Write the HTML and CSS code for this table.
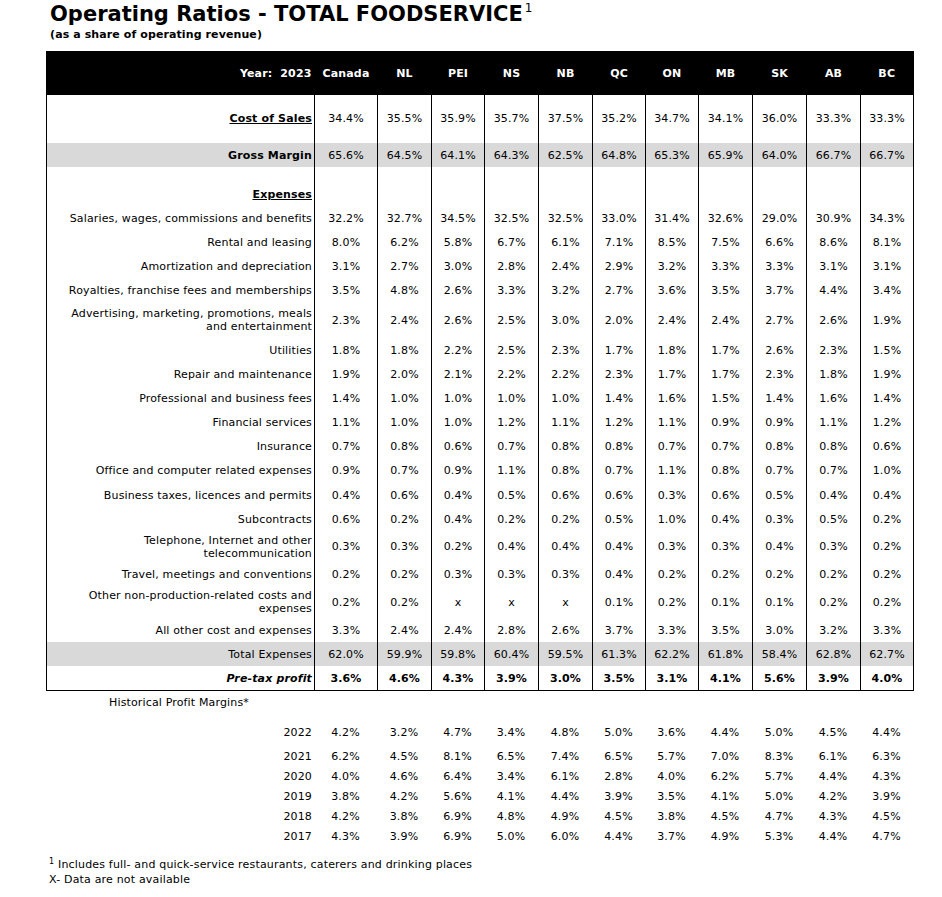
FILE: index.html
```html
<!DOCTYPE html>
<html>
<head>
<meta charset="utf-8">
<title>Operating Ratios - TOTAL FOODSERVICE</title>
<link rel="stylesheet" href="styles.css">
</head>
<body>
<div class="page">
  <h1 class="title">Operating Ratios - TOTAL FOODSERVICE<sup>1</sup></h1>
  <div class="subtitle">(as a share of operating revenue)</div>

  <table class="ratios">
    <colgroup>
      <col class="c-label"><col class="c-canada">
      <col class="c-p54"><col class="c-p53"><col class="c-p54"><col class="c-p54"><col class="c-p53">
      <col class="c-p53"><col class="c-p54"><col class="c-p54"><col class="c-p54"><col class="c-p53">
    </colgroup>
    <thead>
      <tr class="head">
        <th class="lbl">Year:&nbsp; 2023</th><th>Canada</th><th>NL</th><th>PEI</th><th>NS</th><th>NB</th><th>QC</th><th>ON</th><th>MB</th><th>SK</th><th>AB</th><th>BC</th>
      </tr>
    </thead>
    <tbody>
      <tr class="sp sp1"><td></td><td></td><td></td><td></td><td></td><td></td><td></td><td></td><td></td><td></td><td></td><td></td></tr>
      <tr><td class="lbl b u">Cost of Sales</td><td>34.4%</td><td>35.5%</td><td>35.9%</td><td>35.7%</td><td>37.5%</td><td>35.2%</td><td>34.7%</td><td>34.1%</td><td>36.0%</td><td>33.3%</td><td>33.3%</td></tr>
      <tr class="sp sp2"><td></td><td></td><td></td><td></td><td></td><td></td><td></td><td></td><td></td><td></td><td></td><td></td></tr>
      <tr class="grey"><td class="lbl b">Gross Margin</td><td>65.6%</td><td>64.5%</td><td>64.1%</td><td>64.3%</td><td>62.5%</td><td>64.8%</td><td>65.3%</td><td>65.9%</td><td>64.0%</td><td>66.7%</td><td>66.7%</td></tr>
      <tr class="sp sp3"><td></td><td></td><td></td><td></td><td></td><td></td><td></td><td></td><td></td><td></td><td></td><td></td></tr>
      <tr><td class="lbl b u">Expenses</td><td></td><td></td><td></td><td></td><td></td><td></td><td></td><td></td><td></td><td></td><td></td></tr>
      <tr><td class="lbl">Salaries, wages, commissions and benefits</td><td>32.2%</td><td>32.7%</td><td>34.5%</td><td>32.5%</td><td>32.5%</td><td>33.0%</td><td>31.4%</td><td>32.6%</td><td>29.0%</td><td>30.9%</td><td>34.3%</td></tr>
      <tr><td class="lbl">Rental and leasing</td><td>8.0%</td><td>6.2%</td><td>5.8%</td><td>6.7%</td><td>6.1%</td><td>7.1%</td><td>8.5%</td><td>7.5%</td><td>6.6%</td><td>8.6%</td><td>8.1%</td></tr>
      <tr><td class="lbl">Amortization and depreciation</td><td>3.1%</td><td>2.7%</td><td>3.0%</td><td>2.8%</td><td>2.4%</td><td>2.9%</td><td>3.2%</td><td>3.3%</td><td>3.3%</td><td>3.1%</td><td>3.1%</td></tr>
      <tr><td class="lbl">Royalties, franchise fees and memberships</td><td>3.5%</td><td>4.8%</td><td>2.6%</td><td>3.3%</td><td>3.2%</td><td>2.7%</td><td>3.6%</td><td>3.5%</td><td>3.7%</td><td>4.4%</td><td>3.4%</td></tr>
      <tr class="two tall"><td class="lbl">Advertising, marketing, promotions, meals<br>and entertainment</td><td>2.3%</td><td>2.4%</td><td>2.6%</td><td>2.5%</td><td>3.0%</td><td>2.0%</td><td>2.4%</td><td>2.4%</td><td>2.7%</td><td>2.6%</td><td>1.9%</td></tr>
      <tr><td class="lbl">Utilities</td><td>1.8%</td><td>1.8%</td><td>2.2%</td><td>2.5%</td><td>2.3%</td><td>1.7%</td><td>1.8%</td><td>1.7%</td><td>2.6%</td><td>2.3%</td><td>1.5%</td></tr>
      <tr><td class="lbl">Repair and maintenance</td><td>1.9%</td><td>2.0%</td><td>2.1%</td><td>2.2%</td><td>2.2%</td><td>2.3%</td><td>1.7%</td><td>1.7%</td><td>2.3%</td><td>1.8%</td><td>1.9%</td></tr>
      <tr><td class="lbl">Professional and business fees</td><td>1.4%</td><td>1.0%</td><td>1.0%</td><td>1.0%</td><td>1.0%</td><td>1.4%</td><td>1.6%</td><td>1.5%</td><td>1.4%</td><td>1.6%</td><td>1.4%</td></tr>
      <tr><td class="lbl">Financial services</td><td>1.1%</td><td>1.0%</td><td>1.0%</td><td>1.2%</td><td>1.1%</td><td>1.2%</td><td>1.1%</td><td>0.9%</td><td>0.9%</td><td>1.1%</td><td>1.2%</td></tr>
      <tr><td class="lbl">Insurance</td><td>0.7%</td><td>0.8%</td><td>0.6%</td><td>0.7%</td><td>0.8%</td><td>0.8%</td><td>0.7%</td><td>0.7%</td><td>0.8%</td><td>0.8%</td><td>0.6%</td></tr>
      <tr class="r25"><td class="lbl">Office and computer related expenses</td><td>0.9%</td><td>0.7%</td><td>0.9%</td><td>1.1%</td><td>0.8%</td><td>0.7%</td><td>1.1%</td><td>0.8%</td><td>0.7%</td><td>0.7%</td><td>1.0%</td></tr>
      <tr><td class="lbl">Business taxes, licences and permits</td><td>0.4%</td><td>0.6%</td><td>0.4%</td><td>0.5%</td><td>0.6%</td><td>0.6%</td><td>0.3%</td><td>0.6%</td><td>0.5%</td><td>0.4%</td><td>0.4%</td></tr>
      <tr><td class="lbl">Subcontracts</td><td>0.6%</td><td>0.2%</td><td>0.4%</td><td>0.2%</td><td>0.2%</td><td>0.5%</td><td>1.0%</td><td>0.4%</td><td>0.3%</td><td>0.5%</td><td>0.2%</td></tr>
      <tr class="two"><td class="lbl">Telephone, Internet and other<br>telecommunication</td><td>0.3%</td><td>0.3%</td><td>0.2%</td><td>0.4%</td><td>0.4%</td><td>0.4%</td><td>0.3%</td><td>0.3%</td><td>0.4%</td><td>0.3%</td><td>0.2%</td></tr>
      <tr><td class="lbl">Travel, meetings and conventions</td><td>0.2%</td><td>0.2%</td><td>0.3%</td><td>0.3%</td><td>0.3%</td><td>0.4%</td><td>0.2%</td><td>0.2%</td><td>0.2%</td><td>0.2%</td><td>0.2%</td></tr>
      <tr class="two t32"><td class="lbl">Other non-production-related costs and<br>expenses</td><td>0.2%</td><td>0.2%</td><td>x</td><td>x</td><td>x</td><td>0.1%</td><td>0.2%</td><td>0.1%</td><td>0.1%</td><td>0.2%</td><td>0.2%</td></tr>
      <tr><td class="lbl">All other cost and expenses</td><td>3.3%</td><td>2.4%</td><td>2.4%</td><td>2.8%</td><td>2.6%</td><td>3.7%</td><td>3.3%</td><td>3.5%</td><td>3.0%</td><td>3.2%</td><td>3.3%</td></tr>
      <tr class="grey"><td class="lbl">Total Expenses</td><td>62.0%</td><td>59.9%</td><td>59.8%</td><td>60.4%</td><td>59.5%</td><td>61.3%</td><td>62.2%</td><td>61.8%</td><td>58.4%</td><td>62.8%</td><td>62.7%</td></tr>
      <tr class="profit"><td class="lbl bi">Pre-tax profit</td><td>3.6%</td><td>4.6%</td><td>4.3%</td><td>3.9%</td><td>3.0%</td><td>3.5%</td><td>3.1%</td><td>4.1%</td><td>5.6%</td><td>3.9%</td><td>4.0%</td></tr>
    </tbody>
  </table>

  <div class="hist-title">Historical Profit Margins*</div>

  <table class="history">
    <colgroup>
      <col class="c-label"><col class="c-canada">
      <col class="c-p54"><col class="c-p53"><col class="c-p54"><col class="c-p54"><col class="c-p53">
      <col class="c-p53"><col class="c-p54"><col class="c-p54"><col class="c-p54"><col class="c-p53">
    </colgroup>
    <tbody>
      <tr><td class="yr">2022</td><td>4.2%</td><td>3.2%</td><td>4.7%</td><td>3.4%</td><td>4.8%</td><td>5.0%</td><td>3.6%</td><td>4.4%</td><td>5.0%</td><td>4.5%</td><td>4.4%</td></tr>
      <tr class="gap"><td colspan="12"></td></tr>
      <tr><td class="yr">2021</td><td>6.2%</td><td>4.5%</td><td>8.1%</td><td>6.5%</td><td>7.4%</td><td>6.5%</td><td>5.7%</td><td>7.0%</td><td>8.3%</td><td>6.1%</td><td>6.3%</td></tr>
      <tr><td class="yr">2020</td><td>4.0%</td><td>4.6%</td><td>6.4%</td><td>3.4%</td><td>6.1%</td><td>2.8%</td><td>4.0%</td><td>6.2%</td><td>5.7%</td><td>4.4%</td><td>4.3%</td></tr>
      <tr><td class="yr">2019</td><td>3.8%</td><td>4.2%</td><td>5.6%</td><td>4.1%</td><td>4.4%</td><td>3.9%</td><td>3.5%</td><td>4.1%</td><td>5.0%</td><td>4.2%</td><td>3.9%</td></tr>
      <tr><td class="yr">2018</td><td>4.2%</td><td>3.8%</td><td>6.9%</td><td>4.8%</td><td>4.9%</td><td>4.5%</td><td>3.8%</td><td>4.5%</td><td>4.7%</td><td>4.3%</td><td>4.5%</td></tr>
      <tr><td class="yr">2017</td><td>4.3%</td><td>3.9%</td><td>6.9%</td><td>5.0%</td><td>6.0%</td><td>4.4%</td><td>3.7%</td><td>4.9%</td><td>5.3%</td><td>4.4%</td><td>4.7%</td></tr>
    </tbody>
  </table>

  <div class="notes">
    <div><sup>1</sup> Includes full- and quick-service restaurants, caterers and drinking places</div>
    <div>X- Data are not available</div>
  </div>
</div>
</body>
</html>
```

FILE: styles.css
```css
html, body {
  margin: 0;
  padding: 0;
  background: #fff;
}

.page {
  font-family: "DejaVu Sans", Verdana, sans-serif;
  font-size: 11px;
  letter-spacing: 0.15px;
  color: #000;
  padding-left: 46px;
}

.title {
  margin: 0;
  padding: 2px 0 0 4px;
  height: 26px;
  font-size: 21px;
  line-height: 25px;
  font-weight: bold;
  letter-spacing: 0;
}

.title sup {
  font-size: 12px;
  font-weight: normal;
  vertical-align: top;
  line-height: 12px;
  position: relative;
  top: 0;
  margin-left: 2px;
}

.subtitle {
  padding-left: 4px;
  height: 13px;
  line-height: 13px;
  font-size: 11px;
  font-weight: bold;
  overflow: hidden;
  margin-bottom: 10px;
  letter-spacing: 0.1px;
}

table {
  border-collapse: collapse;
  table-layout: fixed;
  width: 867px;
}

.c-label { width: 268px; }
.c-canada { width: 63px; }
.c-p54 { width: 54px; }
.c-p53 { width: 53px; }

.ratios {
  border-left: 1px solid #000;
  border-right: 1px solid #000;
  border-bottom: 1px solid #000;
}

.ratios td, .ratios th {
  padding: 0;
  text-align: center;
  vertical-align: middle;
  white-space: nowrap;
  line-height: 13px;
}

.ratios th {
  background: #000;
  color: #fff;
  font-weight: bold;
  height: 44px;
}

.ratios td {
  height: 24px;
  border-left: 1px solid #000;
  border-right: 1px solid #000;
}

.ratios .lbl {
  text-align: right;
  padding-right: 2px;
}

.ratios th.lbl {
  padding-right: 3px;
}

.ratios .sp1 td { height: 11px; }
.ratios .sp2 td { height: 13px; }
.ratios .sp3 td { height: 15px; }
.ratios .two td { height: 31px; }
.ratios .two.tall td { height: 36px; }
.ratios .two.t32 td { height: 32px; }
.ratios .r25 td { height: 25px; }

.ratios .grey td { background: #d9d9d9; }

.b { font-weight: bold; }
.u { text-decoration: underline; }
.bi { font-weight: bold; font-style: italic; }

.ratios .profit td { font-weight: bold; }

.hist-title {
  height: 24px;
  line-height: 24px;
  padding-left: 63px;
}

.history {
  margin-top: 7px;
}

.history td {
  padding: 0;
  height: 20px;
  line-height: 13px;
  text-align: center;
  vertical-align: middle;
}

.history td.yr {
  text-align: right;
  padding-right: 2px;
}

.history .gap td { height: 4px; }

.notes {
  margin-top: 11px;
  padding-left: 3px;
  line-height: 15px;
  letter-spacing: 0.18px;
}

.notes sup {
  font-size: 8px;
  line-height: 0;
  vertical-align: 4px;
}
```
